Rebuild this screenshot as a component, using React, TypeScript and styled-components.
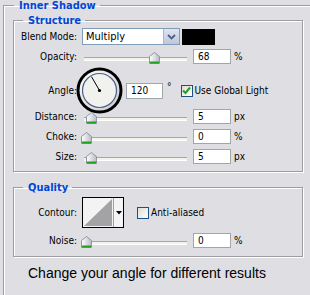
import styled, { createGlobalStyle } from 'styled-components'

//////////////////////////////////////////////////////////////////////

const GlobalStyle = createGlobalStyle`
    html, body {
        margin: 0;
        padding: 0;
        background: #dfdfe3;
    }
    body {
        font-family: "DejaVu Sans Condensed", "Liberation Sans", sans-serif;
        font-size: 10px;
        color: #000;
    }
`

const Page = styled.div`
    width: 310px;
    height: 295px;

    overflow: hidden;

    background: #dfdfe3;
`

const Group = styled.fieldset<{ $outer?: boolean }>`
    box-sizing: border-box;
    width: ${({ $outer }) => $outer ? '340px' : '290px'};
    min-width: 0;
    height: ${({ $outer }) => $outer ? '330px' : 'auto'};

    margin: ${({ $outer }) => $outer ? '0 0 0 3px' : '4px 0 0 0'};
    padding: ${({ $outer }) => $outer ? '0 0 0 9px' : '0'};

    border: 1px solid #9c9ca1;
    box-shadow: inset 1px 1px 0 #fff, 1px 1px 0 #fff;

    & + & { margin-top: 10px; }
`

const Legend = styled.legend<{ $offset: number }>`
    margin-left: ${({ $offset }) => $offset}px;
    padding: 0 4px 0 5px;

    font-family: "DejaVu Sans Condensed", "Liberation Sans", sans-serif;
    font-size: 11px;
    font-weight: bold;
    line-height: 11px;
    color: #0046d5;
`

const Rows = styled.div<{ $bottom: number }>`
    display: flex;
    flex-direction: column;

    padding-bottom: ${({ $bottom }) => $bottom}px;
`

const Row = styled.div<{ $h: number; $mt: number }>`
    height: ${({ $h }) => $h}px;
    margin-top: ${({ $mt }) => $mt}px;

    display: grid;
    grid-template-columns: 63px 1fr;
    column-gap: 5px;
    align-items: center;
`

const Label = styled.span`
    text-align: right;
    white-space: nowrap;
`

const Controls = styled.div`
    height: 100%;

    display: flex;
    align-items: center;
`

const Select = styled.div`
    box-sizing: border-box;
    width: 98px;
    height: 17px;

    display: flex;
    align-items: stretch;

    background: #fff;
    border: 1px solid #7f9db9;
`

const SelectValue = styled.span`
    flex: 1;

    padding-left: 3px;

    font-size: 11px;
    line-height: 15px;
`

const SelectButton = styled.span`
    width: 15px;

    display: flex;
    align-items: center;
    justify-content: center;

    background: linear-gradient(#dfe4f2, #bfc6dc);
    border-left: 1px solid #a9b4d0;
`

const Swatch = styled.div`
    width: 33px;
    height: 16px;

    margin-left: 2px;

    background: #000;
`

const Slider = styled.div`
    position: relative;

    width: 106px;
    height: 100%;
`

const Track = styled.div`
    position: absolute;
    left: 2px;
    right: 1px;
    top: 8px;

    height: 2px;

    background: #f4f3ea;
    border-top: 1px solid #a7a7a4;
    border-bottom: 1px solid #fff;
`

const Thumb = styled.svg`
    position: absolute;
    top: 3px;
`

const Field = styled.div<{ $w?: number }>`
    box-sizing: border-box;
    width: ${({ $w }) => $w ?? 38}px;
    height: 15px;

    margin-left: 5px;
    padding-left: 4px;

    background: #fff;
    border: 1px solid #a0a6ae;

    font-size: 10px;
    line-height: 13px;
`

const Unit = styled.span`
    margin-left: 3px;

    font-size: 10px;
`

const Dial = styled.svg`
    margin-left: -6px;
    flex-shrink: 0;
`

const Check = styled.span`
    box-sizing: border-box;
    width: 12px;
    height: 12px;

    display: flex;
    align-items: center;
    justify-content: center;

    background: linear-gradient(135deg, #dcdcd7, #fff);
    border: 1px solid #1c5180;
`

const CheckLabel = styled.label<{ $ml: number }>`
    margin-left: ${({ $ml }) => $ml}px;

    display: flex;
    align-items: center;
    gap: 2px;

    white-space: nowrap;
`

const Contour = styled.div`
    box-sizing: border-box;
    width: 42px;
    height: 31px;

    display: flex;

    border: 1px solid #000;
    background: #fff;
`

const ContourPreview = styled.svg`
    display: block;
    border-right: 1px solid #a0a0a0;
`

const ContourArrow = styled.div`
    flex: 1;

    display: flex;
    align-items: center;
    justify-content: center;

    background: #f4f4f4;
`

const Caption = styled.p`
    margin: 8px 0 0 15px;

    font-family: "Liberation Sans", Arial, sans-serif;
    font-size: 14px;
    line-height: 16px;
`

//////////////////////////////////////////////////////////////////////

function SliderField({ value, unit }: { value: number; unit: string }) {
    return (
        <Controls>
            <Slider>
                <Track />
                <Thumb width="11" height="12" viewBox="0 0 11 12" style={{ left: value - 1 }}>
                    <defs>
                        <linearGradient id="thumbFill" x1="0" x2="1">
                            <stop offset="0" stopColor="#ffffff" />
                            <stop offset="1" stopColor="#b9bcc4" />
                        </linearGradient>
                    </defs>
                    <path d="M5.5 0.5 L10.5 4.5 L10.5 11.5 L0.5 11.5 L0.5 4.5 Z" fill="url(#thumbFill)" stroke="#8d97a3" />
                    <rect x="1" y="9.5" width="9" height="2" fill="#21a121" />
                </Thumb>
            </Slider>
            <Field>{value}</Field>
            <Unit>{unit}</Unit>
        </Controls>
    )
}

function CheckBox({ checked }: { checked: boolean }) {
    return (
        <Check>
            {checked && (
                <svg width="9" height="9" viewBox="0 0 9 9">
                    <path d="M1 4.5 L3.5 7 L8 1.5" fill="none" stroke="#21a121" strokeWidth="2" />
                </svg>
            )}
        </Check>
    )
}

function AngleDial({ angle }: { angle: number }) {
    const rad = (angle * Math.PI) / 180
    const x = 23.5 + Math.cos(rad) * 16
    const y = 23.5 - Math.sin(rad) * 16

    return (
        <Dial width="47" height="47" viewBox="0 0 47 47">
            <defs>
                <linearGradient id="dialRing" x1="0" y1="0" x2="1" y2="1">
                    <stop offset="0" stopColor="#ffffff" />
                    <stop offset="1" stopColor="#c9c9cc" />
                </linearGradient>
            </defs>
            <circle cx="23.5" cy="23.5" r="21.5" fill="url(#dialRing)" stroke="#000" strokeWidth="3" />
            <circle cx="23.5" cy="23.5" r="17" fill="#f1f1ee" stroke="#4b5f8c" strokeWidth="1.2" />
            <line x1="23.5" y1="23.5" x2={x} y2={y} stroke="#000" strokeWidth="1" />
            <circle cx="23.5" cy="23.5" r="1.6" fill="#000" />
        </Dial>
    )
}

//////////////////////////////////////////////////////////////////////

export default function App() {
    return (
        <Page>
            <GlobalStyle />
            <Group $outer>
                <Legend $offset={1}>Inner Shadow</Legend>

                <Group>
                    <Legend $offset={9}>Structure</Legend>
                    <Rows $bottom={7}>
                        <Row $h={17} $mt={2}>
                            <Label>Blend Mode:</Label>
                            <Controls>
                                <Select>
                                    <SelectValue>Multiply</SelectValue>
                                    <SelectButton>
                                        <svg width="9" height="6" viewBox="0 0 9 6">
                                            <path d="M1 1 L4.5 4.5 L8 1" fill="none" stroke="#4d6185" strokeWidth="1.8" />
                                        </svg>
                                    </SelectButton>
                                </Select>
                                <Swatch />
                            </Controls>
                        </Row>

                        <Row $h={15} $mt={4}>
                            <Label>Opacity:</Label>
                            <SliderField value={68} unit="%" />
                        </Row>

                        <Row $h={44} $mt={3}>
                            <Label>Angle:</Label>
                            <Controls>
                                <AngleDial angle={120} />
                                <Field $w={37} style={{ marginLeft: 3, height: 16 }}>120</Field>
                                <Unit style={{ alignSelf: 'flex-start', marginTop: 14, marginLeft: 4 }}>°</Unit>
                                <CheckLabel $ml={9}>
                                    <CheckBox checked />
                                    Use Global Light
                                </CheckLabel>
                            </Controls>
                        </Row>

                        <Row $h={15} $mt={-2}>
                            <Label>Distance:</Label>
                            <SliderField value={5} unit="px" />
                        </Row>

                        <Row $h={15} $mt={5}>
                            <Label>Choke:</Label>
                            <SliderField value={0} unit="%" />
                        </Row>

                        <Row $h={15} $mt={5}>
                            <Label>Size:</Label>
                            <SliderField value={5} unit="px" />
                        </Row>
                    </Rows>
                </Group>

                <Group>
                    <Legend $offset={9}>Quality</Legend>
                    <Rows $bottom={8}>
                        <Row $h={31} $mt={4}>
                            <Label>Contour:</Label>
                            <Controls>
                                <Contour>
                                    <ContourPreview width="30" height="29" viewBox="0 0 30 29">
                                        <rect width="30" height="29" fill="#f3f3f3" />
                                        <path d="M1 28 L29 1 L29 28 Z" fill="#a3a3a6" />
                                    </ContourPreview>
                                    <ContourArrow>
                                        <svg width="6" height="4" viewBox="0 0 6 4">
                                            <path d="M0 0 L6 0 L3 3.5 Z" fill="#000" />
                                        </svg>
                                    </ContourArrow>
                                </Contour>
                                <CheckLabel $ml={13}>
                                    <CheckBox checked={false} />
                                    Anti-aliased
                                </CheckLabel>
                            </Controls>
                        </Row>

                        <Row $h={15} $mt={5}>
                            <Label>Noise:</Label>
                            <SliderField value={0} unit="%" />
                        </Row>
                    </Rows>
                </Group>

                <Caption>Change your angle for different results</Caption>
            </Group>
        </Page>
    )
}
